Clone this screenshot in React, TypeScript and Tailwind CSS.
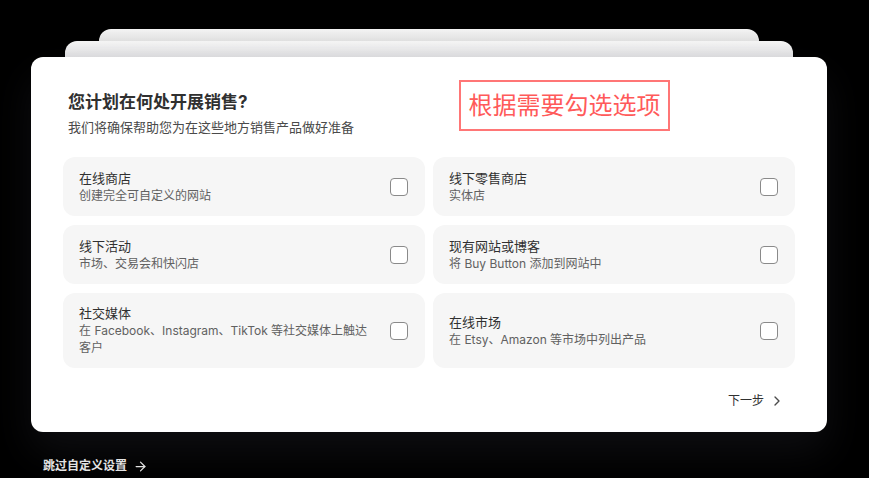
import { ChevronRight, ArrowRight } from 'lucide-react'

interface Option {
	title: string
	desc: string
}

const options: Option[] = [
	{ title: '在线商店', desc: '创建完全可自定义的网站' },
	{ title: '线下零售商店', desc: '实体店' },
	{ title: '线下活动', desc: '市场、交易会和快闪店' },
	{ title: '现有网站或博客', desc: '将 Buy Button 添加到网站中' },
	{ title: '社交媒体', desc: '在 Facebook、Instagram、TikTok 等社交媒体上触达客户' },
	{ title: '在线市场', desc: '在 Etsy、Amazon 等市场中列出产品' },
]

function OptionCard({ title, desc }: Option) {
	return (
		<label className="flex items-center justify-between gap-5 rounded-xl bg-[#f6f6f6] pl-4 pr-[17px] py-[12px] min-h-[59px]">
			<div className="flex flex-col">
				<span className="text-[13px] leading-[17px] text-[#303030]">{title}</span>
				<span className="text-[12px] leading-[17px] text-[#616161]">{desc}</span>
			</div>
			<span className="h-[18px] w-[18px] shrink-0 rounded-[4px] border border-[#8a8a8a] bg-white" />
		</label>
	)
}

export default function App() {
	return (
		<div
			className="min-h-[478px] w-full overflow-hidden bg-black pt-[29px]"
			style={{ fontFamily: 'Inter, "Noto Sans CJK SC", sans-serif' }}
		>
			<div className="ml-[99px] h-[12px] w-[660px] rounded-t-xl bg-gradient-to-b from-[#f4f4f4] to-[#e2e2e2]" />
			<div className="ml-[65px] h-[16px] w-[728px] rounded-t-xl bg-gradient-to-b from-[#f7f7f7] to-[#e4e4e6]" />
			<div className="ml-[31px] w-[796px] rounded-xl bg-white px-8 pt-[30px] pb-[22px] shadow-[0_20px_40px_rgba(40,40,50,0.35)]">
				<div className="flex items-start">
					<div className="pt-[3px] pl-[5px]">
						<h1 className="text-[17px] font-bold leading-[24px] text-[#303030]">您计划在何处开展销售?</h1>
						<p className="mt-[4px] text-[13px] leading-[18px] text-[#4a4a4a]">我们将确保帮助您为在这些地方销售产品做好准备</p>
					</div>
					<div className="ml-[105px] -mt-[7px] flex h-[51px] w-[211px] items-center justify-center border-2 border-[#ff7676] text-[24px] text-[#ff5a5a]">
						根据需要勾选选项
					</div>
				</div>
				<div className="mt-[21px] grid grid-cols-2 gap-x-2 gap-y-[9px]">
					{options.map((o) => (
						<OptionCard key={o.title} {...o} />
					))}
				</div>
				<div className="mt-[24px] flex justify-end pr-[10px]">
					<button className="flex items-center gap-[5px] text-[12px] text-[#303030]">
						下一步
						<ChevronRight className="h-4 w-4 text-[#4a4a4a]" strokeWidth={2} />
					</button>
				</div>
			</div>
			<div className="ml-[43px] mt-[25px] flex items-center gap-[6px] text-[12px] font-bold text-[#e3e3e3]">
				跳过自定义设置
				<ArrowRight className="h-[15px] w-[15px]" strokeWidth={2} />
			</div>
		</div>
	)
}
